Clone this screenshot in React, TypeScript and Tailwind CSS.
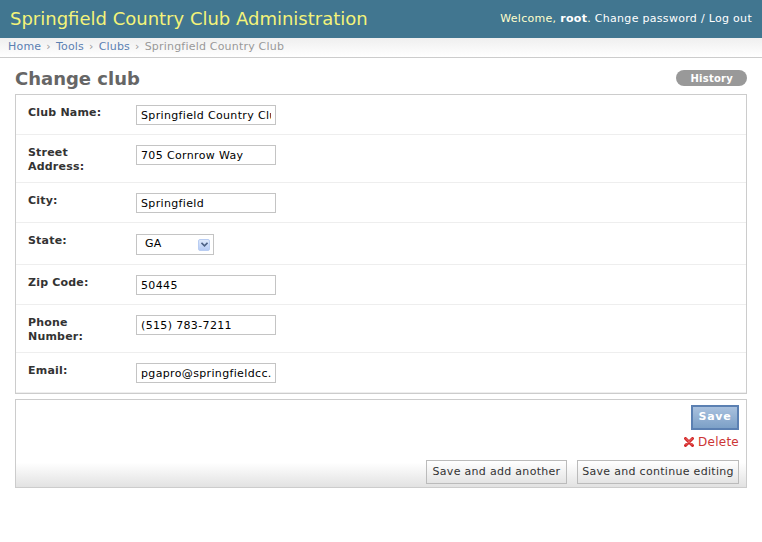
import React from "react";

const fields: { label: string[]; value: string }[] = [
  { label: ["Club Name:"], value: "Springfield Country Club" },
  { label: ["Street", "Address:"], value: "705 Cornrow Way" },
  { label: ["City:"], value: "Springfield" },
  { label: ["State:"], value: "GA" },
  { label: ["Zip Code:"], value: "50445" },
  { label: ["Phone", "Number:"], value: "(515) 783-7211" },
  { label: ["Email:"], value: "pgapro@springfieldcc.com" },
];

function StateSelect({ value }: { value: string }) {
  return (
    <div className="mt-[3px] mb-[1px] flex h-[21px] w-[78px] items-center justify-between border border-[#c4c4c4] bg-white pl-[8px] pr-[3px] text-[11px] text-black">
      <span>{value}</span>
      <span className="flex h-[12px] w-[12px] items-center justify-center rounded-[2px] border border-[#b9cdf2] bg-linear-to-b from-[#dde8fb] to-[#b6cbf5]">
        <svg width="7" height="5" viewBox="0 0 7 5">
          <path d="M0.5 0.8 L3.5 3.8 L6.5 0.8" fill="none" stroke="#4d6185" strokeWidth="1.6" />
        </svg>
      </span>
    </div>
  );
}

function FormRow({ label, value }: { label: string[]; value: string }) {
  return (
    <div className="flex items-start border-b border-[#eee] px-[12px] py-[8px]">
      <label className="w-[108px] shrink-0 pt-[3px] text-[11px] font-bold leading-[14px] tracking-[0.2px] text-[#333]">
        {label.map((l) => (
          <div key={l}>{l}</div>
        ))}
      </label>
      {label[0] === "State:" ? (
        <StateSelect value={value} />
      ) : (
        <input
          readOnly
          value={value}
          className="mt-[2px] mb-[1px] h-[20px] w-[140px] border border-[#c4c4c4] bg-white px-[4px] text-[11px] tracking-[0.35px] text-black outline-none"
        />
      )}
    </div>
  );
}

export default function App() {
  return (
    <div className="min-h-[542px] bg-white font-['DejaVu_Sans',Verdana,sans-serif] text-[12px] tracking-[0.25px] text-[#333]">
      {/* Header */}
      <div className="flex h-[38px] items-center justify-between bg-[#417690] px-[10px]">
        <h1 className="text-[18px] leading-[22px] tracking-normal text-[#f4f379]">Springfield Country Club Administration</h1>
        <div className="text-[11px] tracking-[0.3px] text-[#ffc]">
          Welcome, <strong className="text-white">root</strong>.{" "}
          <a className="text-white">Change password</a>
          <span className="text-white"> / </span>
          <a className="text-white">Log out</a>
        </div>
      </div>

      {/* Breadcrumbs */}
      <div className="flex h-[20px] items-center border-b border-[#ccc] bg-linear-to-b from-[#efefef] to-white px-[8px] text-[11px] tracking-[0.2px] text-[#999]">
        <a className="text-[#5b80b2]">Home</a>
        <span className="mx-[5px]">›</span>
        <a className="text-[#5b80b2]">Tools</a>
        <span className="mx-[5px]">›</span>
        <a className="text-[#5b80b2]">Clubs</a>
        <span className="mx-[5px]">›</span>
        <span>Springfield Country Club</span>
      </div>

      {/* Content */}
      <div className="px-[15px] pt-[10px]">
        <div className="mb-[4px] flex items-center justify-between">
          <h1 className="text-[18px] font-bold leading-[22px] tracking-normal text-[#666]">Change club</h1>
          <a className="mb-[2px] flex h-[16px] items-center rounded-full bg-[#999] px-[14px] text-[10px] font-bold text-white">
            History
          </a>
        </div>

        <fieldset className="border border-[#ccc]">
          {fields.map((f) => (
            <FormRow key={f.label.join(" ")} label={f.label} value={f.value} />
          ))}
        </fieldset>

        {/* Submit row */}
        <div className="mt-[5px] flex flex-col items-end border border-[#ccc] bg-linear-to-b from-white from-72% to-[#e2e2e2] px-[7px] pt-[5px] pb-[3px]">
          <button className="h-[25px] w-[48px] border-2 border-[#5b80b2] bg-linear-to-b from-[#a9c1de] to-[#7ca0c7] text-[11px] font-bold tracking-[0.8px] text-white">
            Save
          </button>
          <a className="mt-[4px] flex h-[16px] items-center gap-[4px] text-[12px] text-[#cc3434]">
            <svg width="10" height="10" viewBox="0 0 10 10">
              <path d="M1.5 1.5 L8.5 8.5 M8.5 1.5 L1.5 8.5" stroke="#d42a2a" strokeWidth="3" strokeLinecap="round" />
              <path d="M2 1.6 L8 7.6 M8 1.6 L2 7.6" stroke="#ef7b7b" strokeWidth="0.8" strokeLinecap="round" />
            </svg>
            Delete
          </a>
          <div className="mt-[10px] flex gap-[10px]">
            <button className="h-[24px] w-[141px] border border-[#bbb] bg-linear-to-b from-white to-[#e4e4e4] text-[11px] tracking-[0.3px] text-[#333]">
              Save and add another
            </button>
            <button className="h-[24px] w-[162px] border border-[#bbb] bg-linear-to-b from-white to-[#e4e4e4] text-[11px] tracking-[0.3px] text-[#333]">
              Save and continue editing
            </button>
          </div>
        </div>
      </div>
    </div>
  );
}
